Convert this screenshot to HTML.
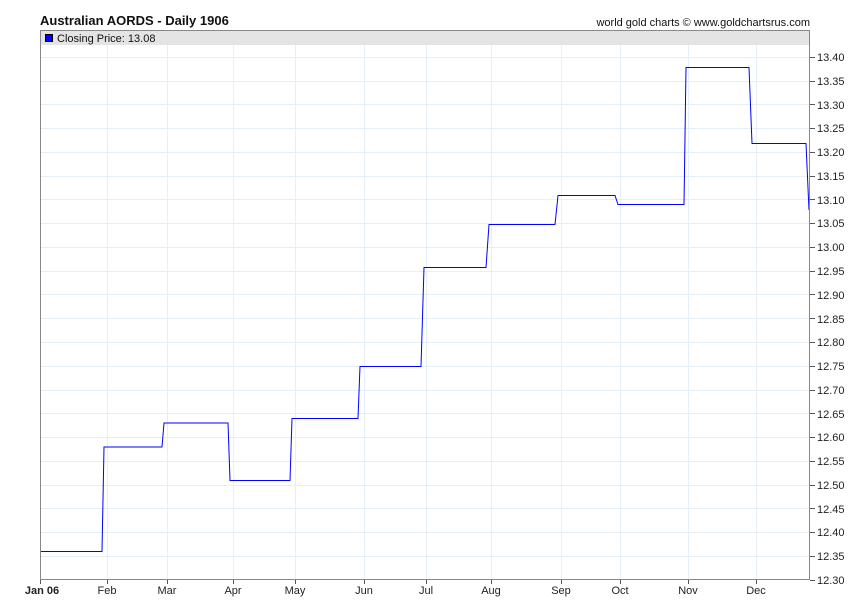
<!DOCTYPE html>
<html><head><meta charset="utf-8"><style>
html,body{margin:0;padding:0;background:#fff;width:850px;height:616px;overflow:hidden}
svg{display:block;font-family:"Liberation Sans",Arial,sans-serif}
</style></head><body>
<svg width="850" height="616" viewBox="0 0 850 616">
<rect x="40" y="30" width="770" height="15" fill="#e4e4e4"/>
<g stroke="#e4eff8" stroke-width="1">
<line x1="107.5" y1="45" x2="107.5" y2="580"/><line x1="167.5" y1="45" x2="167.5" y2="580"/>
<line x1="233.5" y1="45" x2="233.5" y2="580"/><line x1="295.5" y1="45" x2="295.5" y2="580"/>
<line x1="364.5" y1="45" x2="364.5" y2="580"/><line x1="426.5" y1="45" x2="426.5" y2="580"/>
<line x1="491.5" y1="45" x2="491.5" y2="580"/><line x1="561.5" y1="45" x2="561.5" y2="580"/>
<line x1="620.5" y1="45" x2="620.5" y2="580"/><line x1="688.5" y1="45" x2="688.5" y2="580"/>
<line x1="756.5" y1="45" x2="756.5" y2="580"/>
<line x1="40" y1="556.5" x2="810" y2="556.5"/><line x1="40" y1="532.5" x2="810" y2="532.5"/>
<line x1="40" y1="508.5" x2="810" y2="508.5"/><line x1="40" y1="485.5" x2="810" y2="485.5"/>
<line x1="40" y1="461.5" x2="810" y2="461.5"/><line x1="40" y1="437.5" x2="810" y2="437.5"/>
<line x1="40" y1="413.5" x2="810" y2="413.5"/><line x1="40" y1="390.5" x2="810" y2="390.5"/>
<line x1="40" y1="366.5" x2="810" y2="366.5"/><line x1="40" y1="342.5" x2="810" y2="342.5"/>
<line x1="40" y1="318.5" x2="810" y2="318.5"/><line x1="40" y1="294.5" x2="810" y2="294.5"/>
<line x1="40" y1="271.5" x2="810" y2="271.5"/><line x1="40" y1="247.5" x2="810" y2="247.5"/>
<line x1="40" y1="223.5" x2="810" y2="223.5"/><line x1="40" y1="199.5" x2="810" y2="199.5"/>
<line x1="40" y1="176.5" x2="810" y2="176.5"/><line x1="40" y1="152.5" x2="810" y2="152.5"/>
<line x1="40" y1="128.5" x2="810" y2="128.5"/><line x1="40" y1="104.5" x2="810" y2="104.5"/>
<line x1="40" y1="81.5" x2="810" y2="81.5"/><line x1="40" y1="57.5" x2="810" y2="57.5"/>
</g>
<polyline fill="none" stroke="#0000ff" stroke-width="1" points="41,551.5 102,551.5 104,447 162,447 164,423 228,423 230,480.5 290,480.5 292,418.5 358,418.5 360,366.5 421,366.5 424,267.5 486,267.5 489,224.5 555,224.5 558,195.5 615,195.5 618,204.5 684,204.5 686,67.5 749,67.5 752,143.5 806,143.5 809,210"/>
<rect x="40.5" y="30.5" width="769" height="549" fill="none" stroke="#888"/>
<g stroke="#555">
<line x1="810" y1="580.5" x2="815" y2="580.5"/><line x1="810" y1="556.5" x2="815" y2="556.5"/>
<line x1="810" y1="532.5" x2="815" y2="532.5"/><line x1="810" y1="508.5" x2="815" y2="508.5"/>
<line x1="810" y1="485.5" x2="815" y2="485.5"/><line x1="810" y1="461.5" x2="815" y2="461.5"/>
<line x1="810" y1="437.5" x2="815" y2="437.5"/><line x1="810" y1="413.5" x2="815" y2="413.5"/>
<line x1="810" y1="390.5" x2="815" y2="390.5"/><line x1="810" y1="366.5" x2="815" y2="366.5"/>
<line x1="810" y1="342.5" x2="815" y2="342.5"/><line x1="810" y1="318.5" x2="815" y2="318.5"/>
<line x1="810" y1="294.5" x2="815" y2="294.5"/><line x1="810" y1="271.5" x2="815" y2="271.5"/>
<line x1="810" y1="247.5" x2="815" y2="247.5"/><line x1="810" y1="223.5" x2="815" y2="223.5"/>
<line x1="810" y1="199.5" x2="815" y2="199.5"/><line x1="810" y1="176.5" x2="815" y2="176.5"/>
<line x1="810" y1="152.5" x2="815" y2="152.5"/><line x1="810" y1="128.5" x2="815" y2="128.5"/>
<line x1="810" y1="104.5" x2="815" y2="104.5"/><line x1="810" y1="81.5" x2="815" y2="81.5"/>
<line x1="810" y1="57.5" x2="815" y2="57.5"/>
<line x1="40.5" y1="580" x2="40.5" y2="584"/><line x1="107.5" y1="580" x2="107.5" y2="584"/>
<line x1="167.5" y1="580" x2="167.5" y2="584"/><line x1="233.5" y1="580" x2="233.5" y2="584"/>
<line x1="295.5" y1="580" x2="295.5" y2="584"/><line x1="364.5" y1="580" x2="364.5" y2="584"/>
<line x1="426.5" y1="580" x2="426.5" y2="584"/><line x1="491.5" y1="580" x2="491.5" y2="584"/>
<line x1="561.5" y1="580" x2="561.5" y2="584"/><line x1="620.5" y1="580" x2="620.5" y2="584"/>
<line x1="688.5" y1="580" x2="688.5" y2="584"/><line x1="756.5" y1="580" x2="756.5" y2="584"/>
</g>
<g font-size="11" fill="#222">
<text x="817" y="584">12.30</text><text x="817" y="560">12.35</text><text x="817" y="536">12.40</text>
<text x="817" y="513">12.45</text><text x="817" y="489">12.50</text><text x="817" y="465">12.55</text>
<text x="817" y="441">12.60</text><text x="817" y="418">12.65</text><text x="817" y="394">12.70</text>
<text x="817" y="370">12.75</text><text x="817" y="346">12.80</text><text x="817" y="323">12.85</text>
<text x="817" y="299">12.90</text><text x="817" y="275">12.95</text><text x="817" y="251">13.00</text>
<text x="817" y="227">13.05</text><text x="817" y="204">13.10</text><text x="817" y="180">13.15</text>
<text x="817" y="156">13.20</text><text x="817" y="132">13.25</text><text x="817" y="109">13.30</text>
<text x="817" y="85">13.35</text><text x="817" y="61">13.40</text>
</g>
<g font-size="11" fill="#222" text-anchor="middle">
<text x="42" y="594" font-weight="bold">Jan 06</text>
<text x="107" y="594">Feb</text><text x="167" y="594">Mar</text><text x="233" y="594">Apr</text>
<text x="295" y="594">May</text><text x="364" y="594">Jun</text><text x="426" y="594">Jul</text>
<text x="491" y="594">Aug</text><text x="561" y="594">Sep</text><text x="620" y="594">Oct</text>
<text x="688" y="594">Nov</text><text x="756" y="594">Dec</text>
</g>
<text x="40" y="25" font-size="13" font-weight="bold" fill="#111">Australian AORDS - Daily 1906</text>
<text x="810" y="26" font-size="11" fill="#111" text-anchor="end">world gold charts © www.goldchartsrus.com</text>
<rect x="45.5" y="34.5" width="7" height="7" fill="#0000ff" stroke="#000"/>
<text x="57" y="42" font-size="11" fill="#111">Closing Price: 13.08</text>
</svg>
</body></html>
